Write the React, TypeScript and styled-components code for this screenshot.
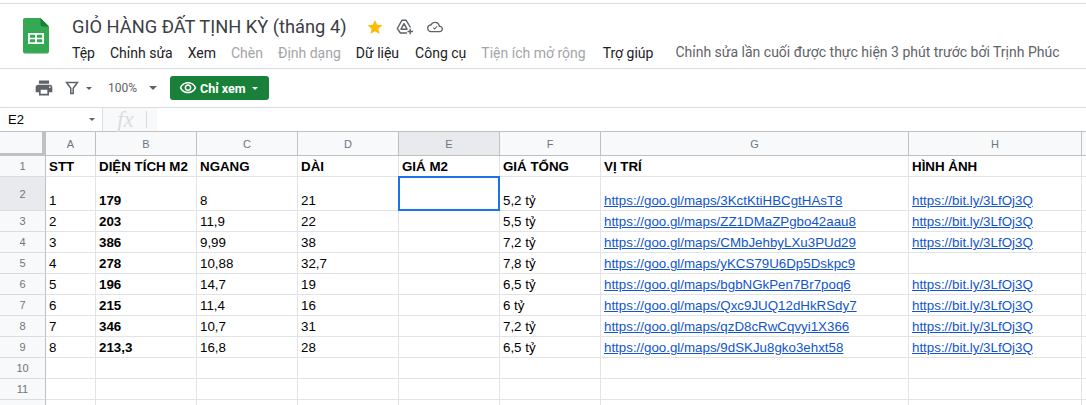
import React from "react";
import styled, { createGlobalStyle } from "styled-components";

const GlobalStyle = createGlobalStyle`
  html, body {
    margin: 0;
    padding: 0;
    background: #fff;
    overflow: hidden;
  }
`;

const Page = styled.div`
  width: 1086px;
  height: 405px;
  overflow: hidden;
  padding-top: 3px;
  box-sizing: border-box;
  font-family: Roboto, "Liberation Sans", sans-serif;
`;

const Header = styled.header`
  height: 66px;
  box-sizing: border-box;
  border-top: 1px solid #dadce0;
  border-bottom: 1px solid #dadce0;
  display: flex;
  padding-left: 23px;
`;

const Logo = styled.div`
  width: 26px;
  padding-top: 14px;
  margin-right: 23px;
`;

const HeaderBody = styled.div`
  display: flex;
  flex-direction: column;
  padding-top: 9px;
`;

const TitleRow = styled.div`
  display: flex;
  align-items: center;
  height: 27px;
`;

const Title = styled.div`
  font-size: 18.3px;
  color: #3c4043;
  margin-right: 20px;
  white-space: nowrap;
`;

const TitleIcon = styled.span<{ $gap: number }>`
  display: flex;
  margin-right: ${(p) => p.$gap}px;
`;

const MenuRow = styled.div`
  display: flex;
  align-items: center;
  height: 25px;
`;

const MenuItem = styled.span<{ $off?: boolean; $gap?: number }>`
  font-size: 14px;
  color: ${(p) => (p.$off ? "#a2a5a9" : "#202124")};
  margin-right: ${(p) => p.$gap ?? 15}px;
  white-space: nowrap;
`;

const LastEdit = styled.span`
  font-size: 14px;
  color: #5f6368;
  margin: -2px 0 0 7px;
  white-space: nowrap;
`;

const Toolbar = styled.div`
  height: 39px;
  box-sizing: border-box;
  border-bottom: 1px solid #dadce0;
  display: flex;
  align-items: center;
  padding-left: 34px;
`;

const ToolIcon = styled.span<{ $gap: number }>`
  display: flex;
  margin-right: ${(p) => p.$gap}px;
`;

const Caret = styled.span<{ $w?: number; $color?: string; $gap?: number }>`
  width: 0;
  height: 0;
  border-left: ${(p) => p.$w ?? 3}px solid transparent;
  border-right: ${(p) => p.$w ?? 3}px solid transparent;
  border-top: ${(p) => p.$w ?? 3}px solid ${(p) => p.$color ?? "#5f6368"};
  margin-right: ${(p) => p.$gap ?? 0}px;
`;

const Zoom = styled.span`
  font-size: 12px;
  color: #5f6368;
  margin-right: 12px;
`;

const ViewOnly = styled.div`
  width: 99px;
  height: 24px;
  margin-left: 13px;
  background: #188038;
  border-radius: 3px;
  display: flex;
  align-items: center;
  padding-left: 9px;
  box-sizing: border-box;
  color: #fff;
  font-size: 12.5px;
  font-weight: 700;
`;

const ViewLabel = styled.span`
  margin: 0 6px 0 3px;
  white-space: nowrap;
`;

const FormulaBar = styled.div`
  height: 24px;
  box-sizing: border-box;
  display: flex;
  align-items: stretch;
  border-bottom: 1px solid #c0c0c0;
`;

const NameBox = styled.div`
  width: 103px;
  box-sizing: border-box;
  border-right: 1px solid #dadce0;
  display: flex;
  align-items: center;
  justify-content: space-between;
  padding: 0 7px 0 8px;
  font-family: "Liberation Sans", Arial, sans-serif;
  font-size: 13px;
  color: #000;
`;

const FxBox = styled.div`
  width: 54px;
  background: #f8f9fa;
  display: flex;
  align-items: center;
  justify-content: center;
  font-family: "Liberation Serif", serif;
  font-style: italic;
  font-size: 23px;
  color: #dadce0;
  padding-right: 9px;
  box-sizing: border-box;
  position: relative;
`;

const FxDivider = styled.span`
  position: absolute;
  right: 10px;
  top: 3px;
  bottom: 3px;
  width: 1px;
  background: #dadce0;
`;

const Sheet = styled.div`
  display: grid;
  grid-template-columns: 46px 50px 101px 101px 101px 101px 101px 308px 173px 5px;
  grid-template-rows: 24px 21px 34px repeat(10, 21px);
  font-family: "Liberation Sans", Arial, sans-serif;
  font-size: 13.33px;
  color: #000;
`;

const Corner = styled.div`
  background: #f8f9fa;
  border-right: 4px solid #c0c0c0;
  border-bottom: 3px solid #c0c0c0;
  box-sizing: border-box;
`;

const ColHead = styled.div<{ $active?: boolean }>`
  background: ${(p) => (p.$active ? "#e8eaed" : "#f8f9fa")};
  border-right: 1px solid #c0c0c0;
  border-bottom: 1px solid #c0c0c0;
  box-sizing: border-box;
  display: flex;
  align-items: center;
  justify-content: center;
  font-size: 11px;
  color: #70757a;
`;

const RowHead = styled.div<{ $active?: boolean }>`
  background: ${(p) => (p.$active ? "#e8eaed" : "#f8f9fa")};
  border-right: 1px solid #c0c0c0;
  border-bottom: 1px solid #dadce0;
  box-sizing: border-box;
  display: flex;
  align-items: center;
  justify-content: center;
  font-size: 11px;
  color: #70757a;
`;

const Cell = styled.div<{ $bold?: boolean }>`
  border-right: 1px solid #e1e3e6;
  border-bottom: 1px solid #e1e3e6;
  box-sizing: border-box;
  display: flex;
  align-items: flex-end;
  padding: 0 3px 1px 3px;
  white-space: nowrap;
  overflow: hidden;
  font-weight: ${(p) => (p.$bold ? 700 : 400)};
  line-height: 16px;
`;

const Edge = styled.div`
  border-bottom: 1px solid #e1e3e6;
  box-sizing: border-box;
`;

const EdgeHead = styled.div`
  background: #f8f9fa;
  border-bottom: 1px solid #c0c0c0;
`;

const Link = styled.span`
  color: #1155cc;
  text-decoration: underline;
`;

const Selection = styled.div`
  border: 2px solid #1a73e8;
  margin: -1px 0 0 -1px;
  width: 102px;
  height: 35px;
  box-sizing: border-box;
`;

const SelectedCell = styled.div`
  border-right: 1px solid #e1e3e6;
  border-bottom: 1px solid #e1e3e6;
  box-sizing: border-box;
`;

const columns = ["A", "B", "C", "D", "E", "F", "G", "H"];
const headings = ["STT", "DIỆN TÍCH M2", "NGANG", "DÀI", "GIÁ M2", "GIÁ TỔNG", "VỊ TRÍ", "HÌNH ẢNH"];
const img = "https://bit.ly/3LfOj3Q";

const rows = [
  ["1", "179", "8", "21", "", "5,2 tỷ", "https://goo.gl/maps/3KctKtiHBCgtHAsT8", img],
  ["2", "203", "11,9", "22", "", "5,5 tỷ", "https://goo.gl/maps/ZZ1DMaZPgbo42aau8", img],
  ["3", "386", "9,99", "38", "", "7,2 tỷ", "https://goo.gl/maps/CMbJehbyLXu3PUd29", img],
  ["4", "278", "10,88", "32,7", "", "7,8 tỷ", "https://goo.gl/maps/yKCS79U6Dp5Dskpc9", ""],
  ["5", "196", "14,7", "19", "", "6,5 tỷ", "https://goo.gl/maps/bgbNGkPen7Br7poq6", img],
  ["6", "215", "11,4", "16", "", "6 tỷ", "https://goo.gl/maps/Qxc9JUQ12dHkRSdy7", img],
  ["7", "346", "10,7", "31", "", "7,2 tỷ", "https://goo.gl/maps/qzD8cRwCqvyi1X366", img],
  ["8", "213,3", "16,8", "28", "", "6,5 tỷ", "https://goo.gl/maps/9dSKJu8gko3ehxt58", img],
  ["", "", "", "", "", "", "", ""],
  ["", "", "", "", "", "", "", ""],
  ["", "", "", "", "", "", "", ""],
];

const SheetsLogo = () => (
  <svg width="26" height="36" viewBox="0 0 26 36">
    <path d="M2 0h15.500L26 8.500V33.500a2 2 0 0 1-2 2H2a2 2 0 0 1-2-2V2a2 2 0 0 1 2-2z" fill="#34a853" />
    <path d="M17.500 0L26 8.500h-6.500a2 2 0 0 1-2-2z" fill="#188038" />
    <path d="M5 15h16v11H5z M6.800 16.800v2.900h5.300v-2.900z M13.900 16.800v2.900h5.300v-2.900z M6.800 21.300v2.900h5.300v-2.900z M13.900 21.300v2.900h5.300v-2.900z" fill="#fff" fillRule="evenodd" />
  </svg>
);

const Star = () => (
  <svg width="16" height="16" viewBox="0 0 24 24">
    <path d="M12 1.500l3.200 7.300 7.900.7-6 5.200 1.800 7.800L12 18.300l-6.900 4.200 1.800-7.800-6-5.200 7.900-.7z" fill="#fbbc04" />
  </svg>
);

const DriveAdd = () => (
  <svg width="18" height="16" viewBox="0 0 18 16" fill="none" stroke="#5f6368" strokeWidth="1.400" strokeLinejoin="round">
    <path d="M14.500 8.500L10 1.200H6L1.300 9.500 4.400 14H11" />
    <path d="M8 4.600L5 10.200h6z" />
    <path d="M14.200 9.800v5.500M11.500 12.500H17" />
  </svg>
);

const CloudDone = () => (
  <svg width="16" height="16" viewBox="0 0 24 24">
    <path d="M19.350 10.040A7.490 7.490 0 0 0 12 4C9.110 4 6.600 5.640 5.350 8.040A5.994 5.994 0 0 0 0 14c0 3.310 2.690 6 6 6h13c2.760 0 5-2.240 5-5 0-2.640-2.050-4.780-4.650-4.960zM19 18H6c-2.210 0-4-1.790-4-4 0-2.050 1.530-3.760 3.560-3.970l1.070-.11.500-.95A5.469 5.469 0 0 1 12 6c2.620 0 4.880 1.860 5.390 4.430l.3 1.500 1.530.11A2.980 2.980 0 0 1 22 15c0 1.650-1.350 3-3 3zm-7.500-2l4.300-4.300-1.100-1.100-3.200 3.200-1.500-1.500-1.100 1.100z" fill="#5f6368" />
  </svg>
);

const PrintIcon = () => (
  <svg width="20" height="20" viewBox="0 0 24 24">
    <path d="M19 8H5c-1.660 0-3 1.340-3 3v6h4v4h12v-4h4v-6c0-1.660-1.340-3-3-3zm-3 11H8v-5h8v5zm3-7c-.550 0-1-.450-1-1s.450-1 1-1 1 .450 1 1-.450 1-1 1zm-1-9H6v4h12V3z" fill="#5f6368" />
  </svg>
);

const FilterIcon = () => (
  <svg width="14" height="14" viewBox="0 0 14 14" fill="none" stroke="#5f6368" strokeWidth="1.500">
    <path d="M1.500 1.500h11L8.200 7.300V12.500H5.800V7.300z" />
  </svg>
);

const EyeIcon = () => (
  <svg width="18" height="18" viewBox="0 0 24 24">
    <path d="M12 6a9.770 9.770 0 0 1 8.820 5.500C19.170 14.870 15.790 17 12 17s-7.170-2.130-8.820-5.500A9.770 9.770 0 0 1 12 6m0-2C7 4 2.730 7.110 1 11.500 2.730 15.890 7 19 12 19s9.270-3.110 11-7.500C21.270 7.110 17 4 12 4zm0 5a2.500 2.500 0 0 1 0 5 2.500 2.500 0 0 1 0-5m0-2c-2.480 0-4.500 2.020-4.500 4.500S9.520 16 12 16s4.500-2.020 4.500-4.500S14.480 7 12 7z" fill="#fff" />
  </svg>
);

const App = () => (
  <Page>
    <GlobalStyle />
    <Header>
      <Logo>
        <SheetsLogo />
      </Logo>
      <HeaderBody>
        <TitleRow>
          <Title>GIỎ HÀNG ĐẤT TỊNH KỲ (tháng 4)</Title>
          <TitleIcon $gap={13}>
            <Star />
          </TitleIcon>
          <TitleIcon $gap={13}>
            <DriveAdd />
          </TitleIcon>
          <TitleIcon $gap={0}>
            <CloudDone />
          </TitleIcon>
        </TitleRow>
        <MenuRow>
          <MenuItem>Tệp</MenuItem>
          <MenuItem>Chỉnh sửa</MenuItem>
          <MenuItem>Xem</MenuItem>
          <MenuItem $off>Chèn</MenuItem>
          <MenuItem $off>Định dạng</MenuItem>
          <MenuItem $gap={16}>Dữ liệu</MenuItem>
          <MenuItem>Công cụ</MenuItem>
          <MenuItem $off $gap={17}>
            Tiện ích mở rộng
          </MenuItem>
          <MenuItem>Trợ giúp</MenuItem>
          <LastEdit>Chỉnh sửa lần cuối được thực hiện 3 phút trước bởi Trịnh Phúc</LastEdit>
        </MenuRow>
      </HeaderBody>
    </Header>
    <Toolbar>
      <ToolIcon $gap={11}>
        <PrintIcon />
      </ToolIcon>
      <ToolIcon $gap={7}>
        <FilterIcon />
      </ToolIcon>
      <Caret $gap={16} />
      <Zoom>100%</Zoom>
      <Caret $w={4} />
      <ViewOnly>
        <EyeIcon />
        <ViewLabel>Chỉ xem</ViewLabel>
        <Caret $w={3.5} $color="#fff" />
      </ViewOnly>
    </Toolbar>
    <FormulaBar>
      <NameBox>
        E2
        <Caret $w={3} />
      </NameBox>
      <FxBox>
        fx
        <FxDivider />
      </FxBox>
    </FormulaBar>
    <Sheet>
      <Corner />
      {columns.map((c) => (
        <ColHead key={c} $active={c === "E"}>
          {c}
        </ColHead>
      ))}
      <EdgeHead />

      <RowHead>1</RowHead>
      {headings.map((h) => (
        <Cell key={h} $bold>
          {h}
        </Cell>
      ))}
      <Edge />

      {rows.map((row, i) => (
        <React.Fragment key={i}>
          {/* the last row is cut off by the window, so it shows no number */}
          <RowHead $active={i === 0}>{i < 10 ? i + 2 : ""}</RowHead>
          {row.map((value, j) => {
            if (i === 0 && j === 4) {
              return (
                <SelectedCell key={j}>
                  <Selection />
                </SelectedCell>
              );
            }
            return (
              <Cell key={j} $bold={j === 1}>
                {j >= 6 && value ? <Link>{value}</Link> : value}
              </Cell>
            );
          })}
          <Edge />
        </React.Fragment>
      ))}
    </Sheet>
  </Page>
);

export default App;
